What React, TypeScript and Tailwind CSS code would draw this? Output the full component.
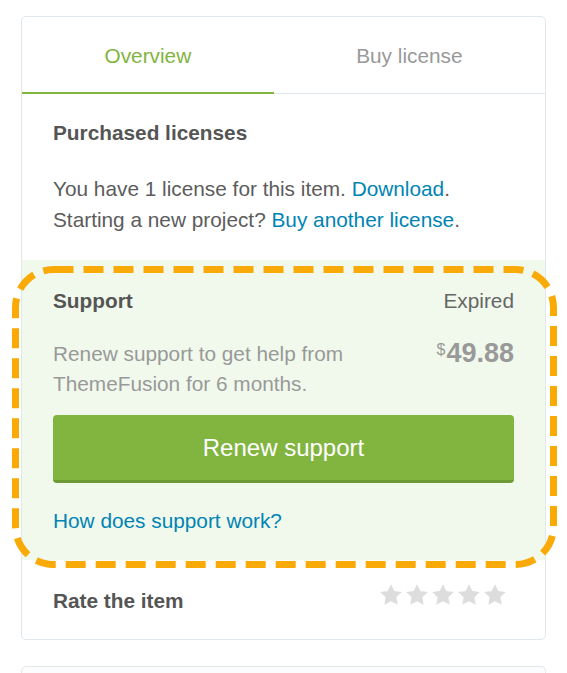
import React from 'react'

const STAR = '12,2 15.09,8.26 22,9.27 17,14.14 18.18,21.02 12,17.77 5.82,21.02 7,14.14 2,9.27 8.91,8.26'

function Star() {
  return (
    <svg width="26" height="26" viewBox="0 0 24 24">
      <polygon points={STAR} fill="#dddddd" />
    </svg>
  )
}

export default function App() {
  return (
    <div className="relative w-[567px] min-h-[673px] bg-white pt-[16px] pl-[21px] overflow-hidden font-['Liberation_Sans',Arial,sans-serif] text-[20.8px] text-[#5c5c5c]">
      {/* Card */}
      <div className="w-[525px] border border-[#e1e8ed] rounded-[5px] bg-white">
        {/* Tabs */}
        <div className="flex h-[77px] border-b border-[#e1e8ed]">
          <button className="flex-auto flex items-center justify-center pt-[2px] text-[#82b440] border-b-2 border-[#82b440] -mb-px">
            Overview
          </button>
          <button className="flex-auto flex items-center justify-center pt-[2px] text-[#999]">
            Buy license
          </button>
        </div>

        {/* Purchased */}
        <div className="px-[31px] pt-[23px]">
          <h3 className="font-bold leading-[31px] text-[#555]">Purchased licenses</h3>
          <p className="mt-[25px] leading-[31px]">
            You have 1 license for this item. <a className="text-[#0084b4]">Download</a>.
            <br />
            Starting a new project? <a className="text-[#0084b4]">Buy another license</a>.
          </p>
        </div>

        {/* Support */}
        <div className="mt-[25px] bg-[#f1f9ec] px-[31px] pt-[25px] pb-[24px]">
          <div className="flex justify-between leading-[31px]">
            <span className="font-bold text-[#555]">Support</span>
            <span className="text-[#666]">Expired</span>
          </div>
          <div className="mt-[23px] flex justify-between">
            <p className="max-w-[330px] leading-[30px] text-[#999]">
              Renew support to get help from ThemeFusion for 6 months.
            </p>
            <div className="flex items-start text-[#999] leading-[30px] -mt-[1px]">
              <span className="text-[16px] leading-[20px] mt-[2px] mr-px">$</span>
              <span className="text-[27px] font-bold">49.88</span>
            </div>
          </div>
          <button className="mt-[16px] h-[68px] w-full rounded-[4px] bg-[#82b440] border-b-[3px] border-[#6d9a35] text-white text-[24px]">
            Renew support
          </button>
          <a className="mt-[22px] block leading-[31px] text-[#0084b4]">How does support work?</a>
        </div>

        {/* Rate */}
        <div className="px-[31px] pt-[25px] pb-[23px] flex justify-between items-start">
          <span className="font-bold leading-[31px] text-[#555]">Rate the item</span>
          <div className="flex -mt-[3px] mr-[6px]">
            <Star />
            <Star />
            <Star />
            <Star />
            <Star />
          </div>
        </div>
      </div>

      {/* Next card */}
      <div className="mt-[26px] w-[525px] h-[40px] border border-[#e1e8ed] rounded-t-[5px] bg-[#fcfcfc]" />

      {/* Highlight annotation */}
      <svg className="absolute left-0 top-0 pointer-events-none" width="567" height="673">
        <rect
          x="15.5"
          y="269.5"
          width="538"
          height="295"
          rx="38"
          fill="none"
          stroke="#f9aa07"
          strokeWidth="7"
          strokeDasharray="20 10"
        />
      </svg>
    </div>
  )
}
